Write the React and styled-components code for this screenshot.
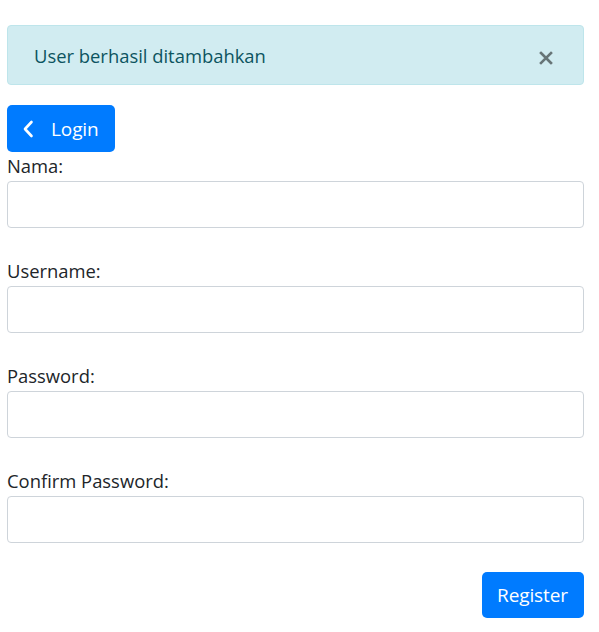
import React, { useState } from "react";
import styled, { createGlobalStyle } from "styled-components";

const GlobalStyle = createGlobalStyle`
  body {
    margin: 0;
    background: #fff;
    font-family: "Open Sans", "Noto Sans", "Liberation Sans", sans-serif;
    color: #212529;
  }
`;

const Page = styled.div`
  padding: 25px 15px 14px 7px;
`;

const Alert = styled.div`
  display: flex;
  align-items: center;
  justify-content: space-between;
  height: 60px;
  box-sizing: border-box;
  padding: 0 30px 0 26px;
  margin-bottom: 20px;
  background: #d1ecf1;
  border: 1px solid #bee5eb;
  border-radius: 4px;
  color: #0c5460;
  font-size: 18.4px;
`;

const CloseButton = styled.button`
  display: flex;
  align-items: center;
  justify-content: center;
  padding: 0;
  margin-top: 6px;
  border: 0;
  background: transparent;
  opacity: 0.5;
  cursor: pointer;
`;

const Button = styled.button`
  display: inline-flex;
  align-items: center;
  gap: 17px;
  height: ${(p) => p.$height || 47}px;
  box-sizing: border-box;
  padding: 0 16px 0 15px;
  border: 0;
  border-radius: 5px;
  background: #007bff;
  color: #fff;
  font-family: inherit;
  font-size: 19px;
  letter-spacing: -0.1px;
  cursor: pointer;
`;

const Form = styled.form`
  display: flex;
  flex-direction: column;
`;

const Group = styled.div`
  display: flex;
  flex-direction: column;
  margin-bottom: 29px;
`;

const Label = styled.label`
  font-size: 18.4px;
  line-height: 27px;
  margin-bottom: 2px;
`;

const Input = styled.input`
  height: 47px;
  box-sizing: border-box;
  border: 1px solid #ced4da;
  border-radius: 4px;
  padding: 0 12px;
  font-size: 18px;
  font-family: inherit;
  outline: none;
`;

const Actions = styled.div`
  display: flex;
  justify-content: flex-end;
`;

const fields = [
  { id: "nama", label: "Nama:", type: "text" },
  { id: "username", label: "Username:", type: "text" },
  { id: "password", label: "Password:", type: "password" },
  { id: "confirm", label: "Confirm Password:", type: "password" },
];

export default function App() {
  const [showAlert, setShowAlert] = useState(true);

  return (
    <Page>
      <GlobalStyle />
      {showAlert && (
        <Alert>
          <span>User berhasil ditambahkan</span>
          <CloseButton onClick={() => setShowAlert(false)} aria-label="close">
            <svg width="14" height="14" viewBox="0 0 14 14">
              <path d="M2 2 L12 12 M12 2 L2 12" stroke="#000" strokeWidth="2.6" strokeLinecap="square" />
            </svg>
          </CloseButton>
        </Alert>
      )}

      <Button type="button">
        <svg width="12" height="18" viewBox="0 0 12 18">
          <path d="M9.5 2 L3 9 L9.5 16" fill="none" stroke="#fff" strokeWidth="2.6" strokeLinecap="round" strokeLinejoin="round" />
        </svg>
        Login
      </Button>

      <Form onSubmit={(e) => e.preventDefault()} autoComplete="off">
        {fields.map((f) => (
          <Group key={f.id}>
            <Label htmlFor={f.id}>{f.label}</Label>
            <Input id={f.id} type={f.type} />
          </Group>
        ))}

        <Actions>
          <Button type="submit" $height={46}>Register</Button>
        </Actions>
      </Form>
    </Page>
  );
}
